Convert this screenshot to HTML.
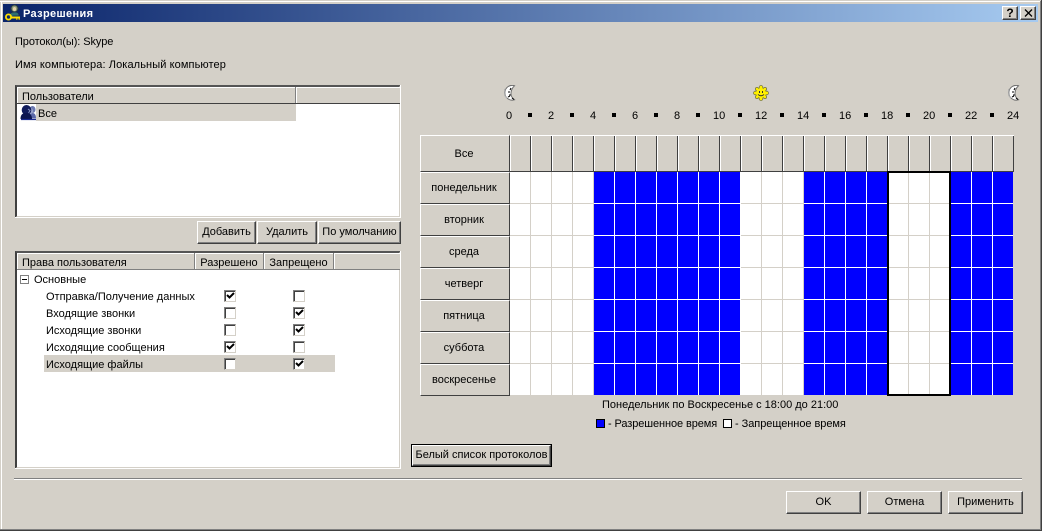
<!DOCTYPE html>
<html><head><meta charset="utf-8"><style>
html,body{margin:0;padding:0;background:#D4D0C8}
#w{position:relative;width:1042px;height:531px;overflow:hidden;background:#D4D0C8;font:11px/14px "Liberation Sans",Arial,sans-serif;color:#000}
#w div,#w span,#w svg{position:absolute;box-sizing:border-box}
.t{white-space:nowrap;line-height:16px}
.c{white-space:nowrap;text-align:center}
.b{background:#D4D0C8;border:1px solid;border-color:#fff #404040 #404040 #fff;box-shadow:inset -1px -1px 0 #808080;text-align:center;white-space:nowrap}
.l{background:#D4D0C8;border:1px solid;border-color:#fff #404040 #404040 #fff;text-align:center;white-space:nowrap;left:420px;width:90px;height:32px;line-height:31px;padding-right:2px}
.n{left:0;width:12px;text-align:center;top:109px}
.d{width:4px;height:4px;background:#000;top:113px}
.ck{width:12px;height:12px;background:#fff;border:1px solid;border-color:#808080 #D4D0C8 #D4D0C8 #808080;box-shadow:inset 1px 1px 0 #404040}
.h{background:#D4D0C8;height:16px;border-right:1px solid #808080;box-shadow:inset 1px 1px 0 #fff;line-height:21px}
.bl{background:#0000ff;background-image:repeating-linear-gradient(90deg,transparent 0 20px,#fff 20px 21px),repeating-linear-gradient(180deg,transparent 0 31px,#fff 31px 32px);top:172px;height:223px}
.wh{background:#fff;background-image:repeating-linear-gradient(90deg,transparent 0 20px,#D4D0C8 20px 21px),repeating-linear-gradient(180deg,transparent 0 31px,#D4D0C8 31px 32px);top:172px;height:223px}
</style></head><body><div id="w">

<div style="left:0;top:1px;width:1041px;height:1px;background:#fff"></div>
<div style="left:1px;top:1px;width:1px;height:528px;background:#fff"></div>
<div style="left:1040px;top:1px;width:1px;height:529px;background:#808080"></div>
<div style="left:1041px;top:0;width:1px;height:531px;background:#404040"></div>
<div style="left:0;top:529px;width:1041px;height:1px;background:#808080"></div>
<div style="left:0;top:530px;width:1042px;height:1px;background:#404040"></div>

<div style="left:3px;top:4px;width:1035px;height:18px;background:linear-gradient(90deg,#0A246A,#A6CAF0)"></div>
<svg style="left:5px;top:4px" width="16" height="17" viewBox="0 0 16 17">
<ellipse cx="9.5" cy="4.5" rx="3.5" ry="3.5" fill="#8a9a78" stroke="#2a3a40" stroke-width="1"/>
<ellipse cx="9.5" cy="5" rx="1.6" ry="2" fill="#e0d0a8"/>
<path d="M4 13 C4 9 7 8 9.5 8 C12 8 14 9 14 11 L14 12 L8 12 L7 14 Z" fill="#2f6f70" stroke="#1a2a50" stroke-width=".8"/>
<circle cx="3.5" cy="13" r="2.6" fill="none" stroke="#FFE000" stroke-width="1.8"/>
<path d="M5.5 13.5 L15 13.5" stroke="#FFE000" stroke-width="2"/>
<path d="M11 15 h1.5 M13.5 15 h1.5" stroke="#D8B800" stroke-width="1.4"/>
</svg>
<div class="t" style="left:23px;top:6px;color:#fff;font-weight:bold;line-height:16px;letter-spacing:.35px">Разрешения</div>
<div class="b" style="left:1002px;top:6px;width:16px;height:14px;font-weight:bold;line-height:13px;font-size:12px">?</div>
<div class="b" style="left:1020px;top:6px;width:16px;height:14px"></div>
<svg style="left:1024px;top:9px" width="9" height="8" viewBox="0 0 9 8"><path d="M1 0.5 L8 7.5 M8 0.5 L1 7.5" stroke="#000" stroke-width="1.3" fill="none"/></svg>

<div class="t" style="left:15px;top:34px;letter-spacing:-.1px">Протокол(ы): Skype</div>
<div class="t" style="left:15px;top:57px;letter-spacing:.1px">Имя компьютера: Локальный компьютер</div>

<!-- users list -->
<div style="left:15px;top:85px;width:386px;height:133px;background:#fff;border:2px solid;border-color:#555 #D4D0C8 #D4D0C8 #404040"></div>
<div style="left:400px;top:85px;width:1px;height:133px;background:#fff"></div>
<div style="left:15px;top:217px;width:386px;height:1px;background:#fff"></div>
<div class="h t" style="left:17px;top:87px;width:279px;padding-left:5px;line-height:20px">Пользователи</div>
<div class="h" style="left:296px;top:87px;width:104px;border-right:0"></div>
<div style="left:17px;top:103px;width:383px;height:1px;background:#404040"></div>
<div style="left:36px;top:104px;width:260px;height:17px;background:#D4D0C8"></div>
<svg style="left:20px;top:104px" width="17" height="17" viewBox="0 0 17 17">
<ellipse cx="12.5" cy="5.5" rx="3" ry="3.5" fill="#6a78b0"/>
<path d="M8 14.5 C8 10 10 9 12.5 9 C15 9 16 11 16 14.5 Z" fill="#5a68a8"/>
<ellipse cx="10.5" cy="7" rx="2.6" ry="3" fill="#9aa4cc"/>
<ellipse cx="6.5" cy="6" rx="4.8" ry="5" fill="#111c5c"/>
<path d="M0.5 15 C0.5 10 3 9 6.5 9 C10 9 12 11 12 15 Z" fill="#0c1650"/>
<path d="M1 15.5 H16" stroke="#1a2a90" stroke-width="1.2"/>
<path d="M8 5 L10 6.5 L8.5 9" stroke="#8894c0" stroke-width="1" fill="none"/>
</svg>
<div class="t" style="left:38px;top:106px;line-height:17px">Все</div>

<!-- buttons -->
<div class="b" style="left:197px;top:221px;width:59px;height:23px;line-height:21px">Добавить</div>
<div class="b" style="left:257px;top:221px;width:60px;height:23px;line-height:21px">Удалить</div>
<div class="b" style="left:318px;top:221px;width:83px;height:23px;line-height:21px">По умолчанию</div>

<!-- rights list -->
<div style="left:15px;top:251px;width:386px;height:218px;background:#fff;border:2px solid;border-color:#555 #D4D0C8 #D4D0C8 #404040"></div>
<div style="left:400px;top:251px;width:1px;height:218px;background:#fff"></div>
<div style="left:15px;top:468px;width:386px;height:1px;background:#fff"></div>
<div class="h t" style="left:17px;top:253px;width:178px;padding-left:5px;line-height:21px">Права пользователя</div>
<div class="h c" style="left:195px;top:253px;width:69px">Разрешено</div>
<div class="h c" style="left:264px;top:253px;width:70px">Запрещено</div>
<div class="h" style="left:334px;top:253px;width:66px;border-right:0"></div>
<div style="left:17px;top:269px;width:383px;height:1px;background:#808080"></div>

<div style="left:20px;top:275px;width:9px;height:9px;border:1px solid #808080;background:#fff"></div>
<div style="left:22px;top:279px;width:5px;height:1px;background:#000"></div>
<div class="t" style="left:34px;top:272px">Основные</div>
<div style="left:44px;top:355px;width:291px;height:17px;background:#D4D0C8"></div>
<div class="t" style="left:46px;top:289px">Отправка/Получение данных</div>
<div class="t" style="left:46px;top:306px">Входящие звонки</div>
<div class="t" style="left:46px;top:323px">Исходящие звонки</div>
<div class="t" style="left:46px;top:340px">Исходящие сообщения</div>
<div class="t" style="left:46px;top:357px">Исходящие файлы</div>

<div class="ck" style="left:224px;top:290px"><svg style="left:1px;top:1px" width="9" height="8"><path d="M1 3 L3.5 5.5 L8 1" stroke="#000" stroke-width="2" fill="none"/></svg></div>
<div class="ck" style="left:293px;top:290px"></div>
<div class="ck" style="left:224px;top:307px"></div>
<div class="ck" style="left:293px;top:307px"><svg style="left:1px;top:1px" width="9" height="8"><path d="M1 3 L3.5 5.5 L8 1" stroke="#000" stroke-width="2" fill="none"/></svg></div>
<div class="ck" style="left:224px;top:324px"></div>
<div class="ck" style="left:293px;top:324px"><svg style="left:1px;top:1px" width="9" height="8"><path d="M1 3 L3.5 5.5 L8 1" stroke="#000" stroke-width="2" fill="none"/></svg></div>
<div class="ck" style="left:224px;top:341px"><svg style="left:1px;top:1px" width="9" height="8"><path d="M1 3 L3.5 5.5 L8 1" stroke="#000" stroke-width="2" fill="none"/></svg></div>
<div class="ck" style="left:293px;top:341px"></div>
<div class="ck" style="left:224px;top:358px"></div>
<div class="ck" style="left:293px;top:358px"><svg style="left:1px;top:1px" width="9" height="8"><path d="M1 3 L3.5 5.5 L8 1" stroke="#000" stroke-width="2" fill="none"/></svg></div>

<!-- time icons -->
<svg style="left:504px;top:85px" width="12" height="16" viewBox="0 0 12 16">
<path d="M10.5 .7 A7.4 7.4 0 1 0 10.5 14.8 C8 13 6.8 10.5 7 8 C7.2 5 8.5 2.5 10.5 .7 Z" fill="#fff" stroke="#707070" stroke-width="1"/>
<path d="M1 4 A7 7 0 0 0 3 13" stroke="#b0b0b0" stroke-width="1.2" fill="none"/>
<path d="M7 3 L6 5 M4 7 h2 M5 10 h2 M4 12 L6 11 M8 13 L10 14.5" stroke="#000" stroke-width="1" fill="none"/>
</svg>
<svg style="left:1008px;top:85px" width="12" height="16" viewBox="0 0 12 16">
<path d="M10.5 .7 A7.4 7.4 0 1 0 10.5 14.8 C8 13 6.8 10.5 7 8 C7.2 5 8.5 2.5 10.5 .7 Z" fill="#fff" stroke="#707070" stroke-width="1"/>
<path d="M1 4 A7 7 0 0 0 3 13" stroke="#b0b0b0" stroke-width="1.2" fill="none"/>
<path d="M7 3 L6 5 M4 7 h2 M5 10 h2 M4 12 L6 11 M8 13 L10 14.5" stroke="#000" stroke-width="1" fill="none"/>
</svg>
<svg style="left:753px;top:85px" width="16" height="16" viewBox="0 0 16 16">
<g fill="#FFF000" stroke="#7a7a40" stroke-width=".8">
<circle cx="8" cy="2.3" r="1.8"/><circle cx="8" cy="13.7" r="1.8"/><circle cx="2.3" cy="8" r="1.8"/><circle cx="13.7" cy="8" r="1.8"/>
<circle cx="4" cy="4" r="1.6"/><circle cx="12" cy="4" r="1.6"/><circle cx="4" cy="12" r="1.6"/><circle cx="12" cy="12" r="1.6"/>
</g>
<circle cx="8" cy="8" r="5" fill="#FFF000"/>
<rect x="6" y="6" width="1" height="2" fill="#333"/><rect x="9" y="6" width="1" height="2" fill="#333"/>
<path d="M5 9.5 Q8 12 11 9.5" stroke="#333" fill="none" stroke-width="1"/>
</svg>

<!-- hour labels -->
<div class="n" style="left:503px">0</div><div class="d" style="left:528px"></div>
<div class="n" style="left:545px">2</div><div class="d" style="left:570px"></div>
<div class="n" style="left:587px">4</div><div class="d" style="left:612px"></div>
<div class="n" style="left:629px">6</div><div class="d" style="left:654px"></div>
<div class="n" style="left:671px">8</div><div class="d" style="left:696px"></div>
<div class="n" style="left:713px">10</div><div class="d" style="left:738px"></div>
<div class="n" style="left:755px">12</div><div class="d" style="left:780px"></div>
<div class="n" style="left:797px">14</div><div class="d" style="left:822px"></div>
<div class="n" style="left:839px">16</div><div class="d" style="left:864px"></div>
<div class="n" style="left:881px">18</div><div class="d" style="left:906px"></div>
<div class="n" style="left:923px">20</div><div class="d" style="left:948px"></div>
<div class="n" style="left:965px">22</div><div class="d" style="left:990px"></div>
<div class="n" style="left:1007px">24</div>

<!-- grid -->
<div class="l" style="top:135px;height:37px;line-height:37px">Все</div>
<div style="left:510px;top:135px;width:504px;height:37px;background-color:#D4D0C8;background-image:linear-gradient(180deg,#fff 0 1px,transparent 1px),repeating-linear-gradient(90deg,#fff 0 1px,transparent 1px 20px,#404040 20px 21px);border-bottom:1px solid #404040"></div>
<div class="l" style="top:172px">понедельник</div>
<div class="l" style="top:204px">вторник</div>
<div class="l" style="top:236px">среда</div>
<div class="l" style="top:268px">четверг</div>
<div class="l" style="top:300px">пятница</div>
<div class="l" style="top:332px">суббота</div>
<div class="l" style="top:364px">воскресенье</div>

<div class="wh" style="left:510px;width:84px"></div>
<div class="bl" style="left:594px;width:147px"></div>
<div class="wh" style="left:741px;width:63px"></div>
<div class="bl" style="left:804px;width:84px"></div>
<div class="wh" style="left:888px;width:63px"></div>
<div class="bl" style="left:951px;width:62px"></div>
<div style="left:887px;top:171px;width:64px;height:225px;border:2px solid #000"></div>

<div class="t" style="left:602px;top:397px">Понедельник по Воскресенье с 18:00 до 21:00</div>
<div style="left:596px;top:419px;width:9px;height:9px;background:#0000ff;border:1px solid #000"></div>
<div class="t" style="left:608px;top:416px;letter-spacing:-.1px">- Разрешенное время</div>
<div style="left:723px;top:419px;width:9px;height:9px;background:#fff;border:1px solid #000"></div>
<div class="t" style="left:735px;top:416px;letter-spacing:-.05px">- Запрещенное время</div>

<div style="left:411px;top:444px;width:141px;height:23px;border:1px solid #000;background:#D4D0C8"></div>
<div class="b" style="left:412px;top:445px;width:139px;height:21px;line-height:19px">Белый список протоколов</div>

<div style="left:14px;top:478px;width:1008px;height:1px;background:#808080"></div>
<div style="left:14px;top:479px;width:1008px;height:1px;background:#fff"></div>

<div class="b" style="left:786px;top:491px;width:75px;height:23px;line-height:21px">OK</div>
<div class="b" style="left:867px;top:491px;width:75px;height:23px;line-height:21px">Отмена</div>
<div class="b" style="left:948px;top:491px;width:75px;height:23px;line-height:21px">Применить</div>
</div></body></html>
